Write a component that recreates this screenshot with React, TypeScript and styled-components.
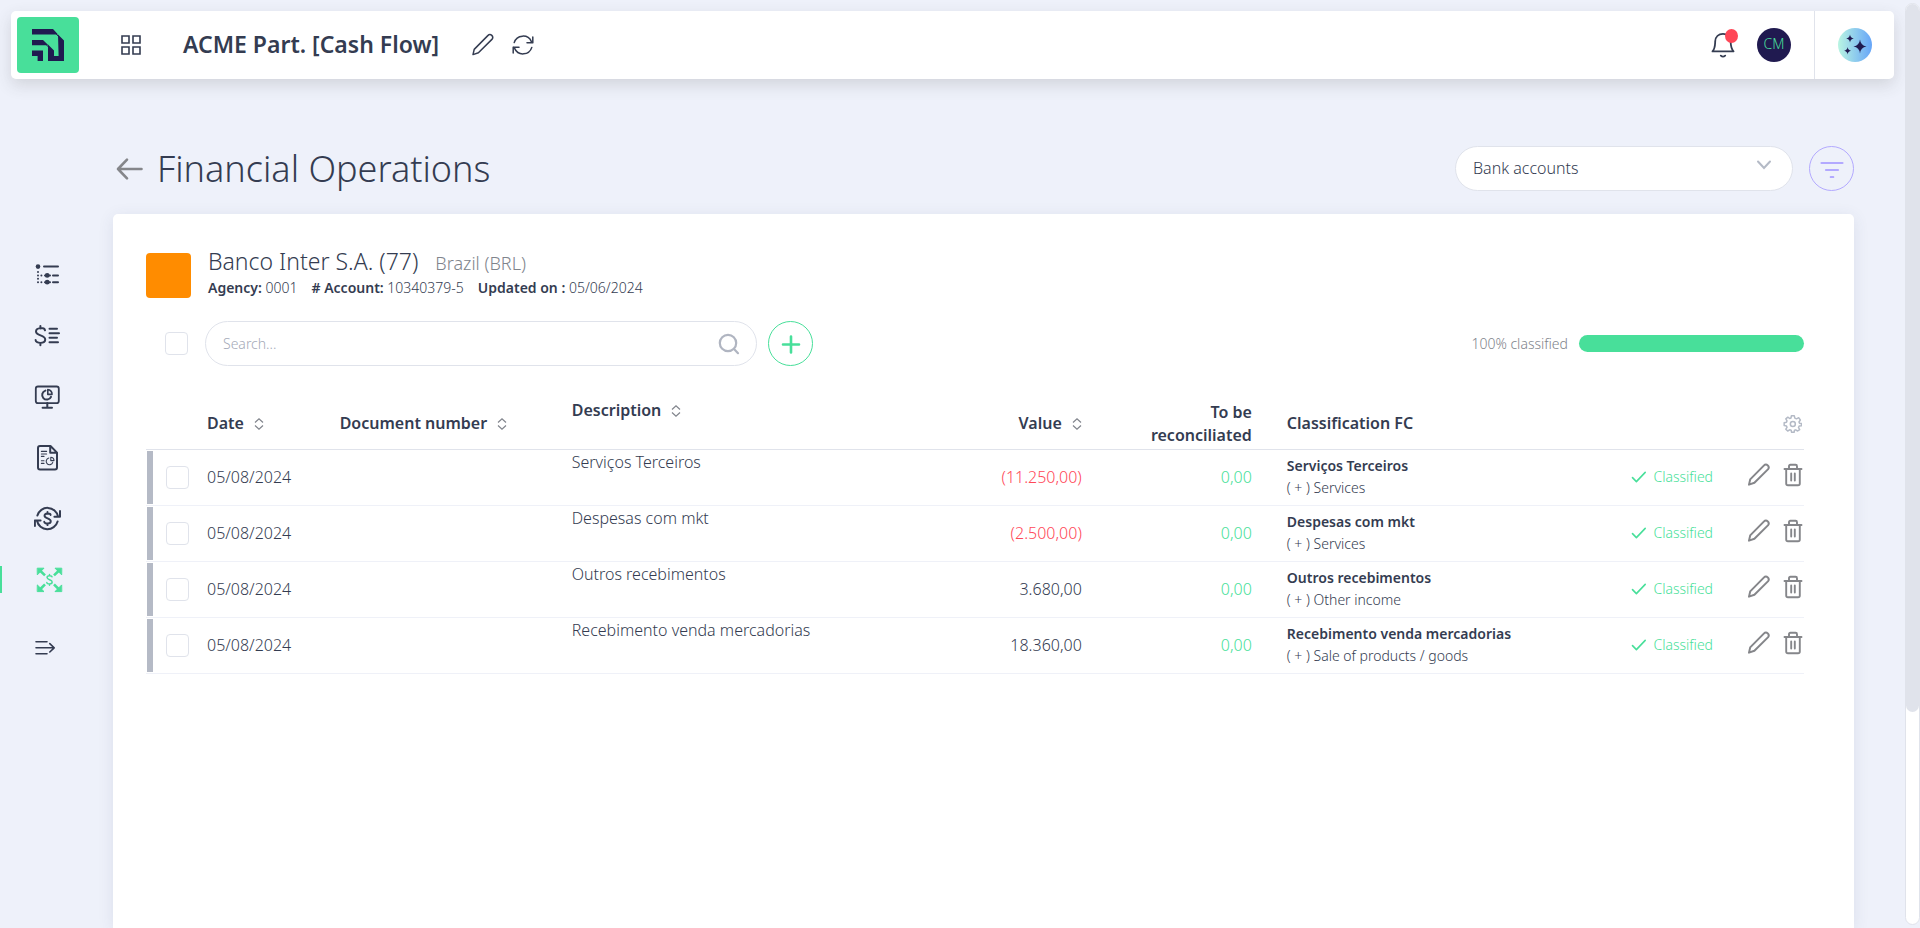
import React from "react";
import styled, { createGlobalStyle, css } from "styled-components";

const INK = "#343c51";
const GREEN = "#48df9a";
const LINE = "#e0e3eb";
const GREY = "#80848c";
const LIGHT = 350;

const Global = createGlobalStyle`
  *, *::before, *::after { box-sizing: border-box; }
  html { height: 100%; }
  body {
    margin: 0;
    height: 100%;
    background: #eef1fa;
    color: ${INK};
    font-family: "Noto Sans", "Open Sans", sans-serif;
    font-size: 16px;
    font-weight: ${LIGHT};
    line-height: 24px;
  }
  #root { height: 100%; }
  button, input, select { font: inherit; color: inherit; }
  svg { display: block; flex: none; }
`;

const Viewport = styled.div`
  display: flex;
  height: 100vh;
  overflow: hidden;
`;

const Page = styled.div`
  flex: 1;
  min-width: 0;
  display: flex;
  flex-direction: column;
  padding: 11px 11px 0;
`;

const ScrollTrack = styled.div`
  width: 15px;
  margin: 3px 0;
  flex: none;
  background: #fff;
  border: 1px solid ${LINE};
  border-radius: 8px;
`;

const ScrollThumb = styled.div`
  height: 77%;
  background: #e0e3eb;
  border-radius: 8px;
`;

const TopBar = styled.header`
  display: flex;
  align-items: center;
  height: 68px;
  flex: none;
  padding: 0 22px 0 6px;
  background: #fff;
  border-radius: 5px;
  box-shadow: 0 6px 16px rgba(60, 60, 60, 0.16);
`;

const Logo = styled.a`
  display: flex;
  width: 62px;
  height: 56px;
  align-items: center;
  justify-content: center;
  border-radius: 4px;
  background: ${GREEN};
`;

const IconButton = styled.button<{ $tone?: string }>`
  position: relative;
  display: inline-flex;
  align-items: center;
  justify-content: center;
  vertical-align: middle;
  width: 24px;
  height: 24px;
  padding: 0;
  border: 0;
  background: none;
  color: ${(p) => p.$tone ?? INK};
  cursor: pointer;
`;

const AppsSlot = styled.div`
  display: flex;
  margin: 0 40px;
`;

const Company = styled.h2`
  margin: 0 32px 0 0;
  padding-bottom: 2px;
  font-size: 23px;
  line-height: 32px;
  font-weight: 600;
  white-space: nowrap;
`;

const TitleActions = styled.div`
  display: flex;
  gap: 16px;
`;

const TopRight = styled.div`
  display: flex;
  align-items: center;
  align-self: stretch;
  gap: 22px;
  margin-left: auto;
`;

const Badge = styled.span`
  position: absolute;
  top: -4px;
  right: -3px;
  width: 13px;
  height: 14px;
  border-radius: 50%;
  background: #ff4757;
`;

const Avatar = styled.button`
  width: 34px;
  height: 34px;
  padding: 0 0 2px;
  border: 0;
  border-radius: 50%;
  background: #201a50;
  color: ${GREEN};
  font-size: 14px;
`;

const AssistantSlot = styled.div`
  display: flex;
  align-items: center;
  align-self: stretch;
  margin-left: 1px;
  padding-left: 23px;
  border-left: 1px solid ${LINE};
`;

const Assistant = styled(Avatar)`
  display: flex;
  align-items: center;
  justify-content: center;
  padding: 0;
  background: linear-gradient(90deg, #b9f5e2, #66a5f8);
  color: #201a50;
`;

const Body = styled.div`
  display: flex;
  flex: 1;
  min-height: 0;
`;

const Sidebar = styled.nav`
  display: flex;
  flex-direction: column;
  gap: 34px;
  width: 102px;
  flex: none;
  padding-top: 182px;
  margin-left: -11px;
`;

const NavLink = styled.a<{ $active?: boolean }>`
  display: flex;
  align-items: center;
  height: 27px;
  padding-left: 32px;
  border-left: 2px solid ${(p) => (p.$active ? GREEN : "transparent")};
  color: ${(p) => (p.$active ? GREEN : INK)};
  &:last-child { margin-top: 6px; }
`;

const Main = styled.main`
  flex: 1;
  min-width: 0;
  display: flex;
  flex-direction: column;
  padding: 67px 40px 0 11px;
`;

const Heading = styled.div`
  display: flex;
  align-items: center;
  height: 45px;
  flex: none;
  margin-bottom: 23px;
`;

const Title = styled.h1`
  margin: 0 auto 0 13px;
  font-size: 36px;
  line-height: 44px;
  font-weight: ${LIGHT};
`;

const BackLink = styled.a`
  display: flex;
  margin-left: 3px;
  color: #85868a;
`;

const SelectWrap = styled.label`
  position: relative;
  width: 338px;
  height: 45px;
  margin-right: 16px;
`;

const Select = styled.select`
  appearance: none;
  width: 100%;
  height: 100%;
  padding: 0 48px 2px 17px;
  border: 1px solid ${LINE};
  border-radius: 23px;
  background: #fff;
`;

const SelectArrow = styled.span`
  position: absolute;
  right: 21px;
  top: 14px;
  color: #b4bac6;
  pointer-events: none;
`;

const RoundButton = styled.button<{ $tone: string }>`
  display: flex;
  align-items: center;
  justify-content: center;
  width: 45px;
  height: 45px;
  flex: none;
  padding: 0;
  border: 1px solid ${(p) => p.$tone};
  border-radius: 50%;
  background: transparent;
  color: ${(p) => p.$tone};
`;

const Card = styled.section`
  flex: 1;
  padding: 31px 50px 0 33px;
  background: #fff;
  border-radius: 5px 5px 0 0;
  box-shadow: 0 3px 16px rgba(60, 70, 110, 0.1);
`;

const Account = styled.div`
  display: flex;
  align-items: flex-end;
  gap: 17px;
`;

const BankLogo = styled.div`
  width: 45px;
  height: 45px;
  border-radius: 4px;
  background: #ff8c00;
`;

const AccountName = styled.h3`
  display: flex;
  align-items: baseline;
  gap: 17px;
  margin: 0;
  font-size: 23px;
  line-height: 32px;
  font-weight: ${LIGHT};
`;

const Country = styled.span`
  font-size: 18px;
  color: ${GREY};
`;

const Facts = styled.div`
  display: flex;
  gap: 14px;
  padding-bottom: 1px;
  font-size: 14px;
  line-height: 18px;
  b { font-weight: 600; }
`;

const Tools = styled.div`
  display: flex;
  align-items: center;
  margin: 23px 0 29px;
`;

const Check = styled.input`
  appearance: none;
  display: block;
  width: 23px;
  height: 23px;
  margin: 0;
  border: 1px solid ${LINE};
  border-radius: 4px;
  background: #fff;
`;

const ToolsCheck = styled.div`
  padding: 0 17px 0 19px;
`;

const SearchBox = styled.label`
  display: flex;
  align-items: center;
  width: 552px;
  height: 45px;
  margin-right: 11px;
  padding: 0 16px 0 17px;
  border: 1px solid ${LINE};
  border-radius: 23px;
  color: #b0b5c1;
`;

const SearchInput = styled.input`
  flex: 1;
  border: 0;
  outline: 0;
  padding: 0;
  font-size: 14px;
  background: transparent;
  &::placeholder { color: #a5aab8; opacity: 1; }
`;

const Progress = styled.div`
  display: flex;
  align-items: center;
  gap: 11px;
  margin-left: auto;
  font-size: 14px;
  color: ${GREY};
`;

const Meter = styled.div`
  width: 225px;
  height: 17px;
  border-radius: 9px;
  background: ${GREEN};
`;

const Table = styled.table`
  width: 100%;
  table-layout: fixed;
  border-collapse: collapse;
`;

type CellProps = { $right?: boolean; $top?: boolean; $tone?: string };

const cell = css<CellProps>`
  padding: 0;
  text-align: ${(p) => (p.$right ? "right" : "left")};
  vertical-align: ${(p) => (p.$top ? "top" : "middle")};
  color: ${(p) => p.$tone ?? INK};
`;

const Th = styled.th<CellProps>`
  ${cell}
  height: 54px;
  padding-top: 4px;
  line-height: 23px;
  font-weight: 600;
  border-bottom: 1px solid ${LINE};
`;

const Td = styled.td<CellProps>`
  ${cell}
  height: 56px;
  border-bottom: 1px solid #eff1f8;
`;

const Sort = styled.button`
  display: inline-flex;
  align-items: center;
  gap: 10px;
  padding: 0;
  border: 0;
  background: none;
  font-weight: 600;
  line-height: 23px;
`;

const Marker = styled.div`
  display: flex;
  align-items: center;
  height: 53px;
  margin-left: 1px;
  padding-left: 13px;
  border-left: 6px solid #b5bac6;
`;

const Category = styled.div`
  padding-left: 35px;
  font-size: 14px;
  line-height: 22px;
  b { display: block; font-weight: 600; }
`;

const HeadIndent = styled.div`
  padding-left: 35px;
`;

const Status = styled.span`
  display: inline-flex;
  align-items: center;
  gap: 6px;
  font-size: 14px;
`;

const RowActions = styled.div`
  display: flex;
  justify-content: flex-end;
  gap: 9px;
  padding-bottom: 5px;
`;

const Pencil = ({ w = 1.5 }: { w?: number }) => (
  <svg width="24" height="24" viewBox="0 0 24 24" fill="none" stroke="currentColor" strokeWidth={w} strokeLinejoin="round">
    <path d="M2 21.6 L3.2 16.4 L16.8 2.6 C18 1.4 19.7 1.4 20.8 2.4 C22 3.6 21.9 5.2 20.9 6.4 L7.4 19.8 Z" />
  </svg>
);

const Trash = () => (
  <svg width="24" height="24" viewBox="-1 0 24 24" fill="none" stroke="currentColor" strokeWidth="1.9" strokeLinecap="round" strokeLinejoin="round">
    <path d="M3.5 6 H20.5 M8 6 V3.2 Q8 1.8 9.4 1.8 H14.6 Q16 1.8 16 3.2 V6 M5.2 6 V20.4 Q5.2 22.2 7 22.2 H17 Q18.8 22.2 18.8 20.4 V6 M10.2 10.5 V17.5 M13.8 10.5 V17.5" />
  </svg>
);

const SortGlyph = () => (
  <svg width="10" height="12" viewBox="0 0 10 12" fill="none" stroke={GREY} strokeWidth="1.2">
    <path d="M1 4.5 L5 .9 L9 4.5 M1 7.5 L5 11.1 L9 7.5" />
  </svg>
);

const dollar = "M4.6 -5.2 C4.2 -8.2 -4.4 -8.4 -4.4 -4 C-4.4 .4 4.8 -.6 4.8 4 C4.8 8.6 -4.8 8.2 -4.8 4.6 M0 -9.6 V-7 M0 7.4 V9.8";

const navItems: { label: string; active?: boolean; art: React.ReactNode }[] = [
  {
    label: "Chart of accounts",
    art: (
      <>
        <path d="M10 5.6 H24" />
        <path d="M19 14.4 H24 M19 21.2 H24 M11 14.4 H16 M11 21.2 H16" />
        <g fill="currentColor" stroke="none">
          <circle cx="4" cy="5.6" r="2.3" /><circle cx="13.2" cy="14.4" r="2.4" /><circle cx="13.2" cy="21.2" r="2.4" />
          <circle cx="4" cy="11" r="1" /><circle cx="4" cy="14.4" r="1" /><circle cx="4" cy="17.8" r="1" /><circle cx="4" cy="21.2" r="1" />
          <circle cx="7.4" cy="14.4" r="1" /><circle cx="7.4" cy="21.2" r="1" />
        </g>
      </>
    ),
  },
  {
    label: "Budget",
    art: (
      <>
        <path d={dollar} transform="translate(6.4 13.5)" />
        <path d="M15.5 6.8 H23 M15.5 11.2 H25 M15.5 15.8 H23 M15.5 20.2 H24" />
      </>
    ),
  },
  {
    label: "Dashboard",
    art: (
      <>
        <rect x="1.8" y="3.5" width="23" height="16.6" rx="2.2" strokeWidth="1.8" />
        <path d="M13.3 20 V24.6 M8.6 24.8 H18" />
        <path d="M11.4 7.6 A4.6 4.6 0 1 0 17 13.8" />
        <path strokeWidth="1.6" d="M13.8 6.6 V11.4 H18 A4.4 4.4 0 0 0 13.8 6.6 Z" />
      </>
    ),
  },
  {
    label: "Reports",
    art: (
      <>
        <path d="M6 2 H16.5 L23 8.6 V23.4 Q23 25.4 21 25.4 H6 Q4 25.4 4 23.4 V4 Q4 2 6 2 Z M16.2 2.6 V8.8 H22.6" />
        <path strokeWidth="1.1" d="M7.4 7.4 H12.6 M7.4 10 H12.6 M7.4 12.4 H10 M7.4 16.8 H10 M7.4 19.4 H10 M14.8 14 A3.4 3.4 0 1 0 18.8 18.4 M16.8 13.2 V16.6 H20 A3.3 3.3 0 0 0 16.8 13.2 Z" />
      </>
    ),
  },
  {
    label: "Cash flow",
    art: (
      <>
        <path d={dollar} transform="translate(13.5 13.5) scale(.68)" strokeWidth="2.8" />
        <path d="M3.4 10.6 A10.6 10.6 0 0 1 24 11.4 M23.6 16.4 A10.6 10.6 0 0 1 3 15.8 M26 6 V11.8 H20.4 M.9 21 V15.4 H6.6" />
      </>
    ),
  },
  {
    label: "Financial operations",
    active: true,
    art: (
      <g transform="translate(2 0)">
        <path d={dollar} transform="translate(13.5 13.8) scale(.56)" strokeWidth="2.6" />
        <path strokeWidth="2.6" strokeLinecap="butt" d="M3.4 4 L9 9.4 M23.6 4 L18 9.4 M3.4 24 L9 18.4 M23.6 24 L18 18.4" />
        <path fill="currentColor" strokeWidth="1" d="M1.6 2.2 H8 L1.6 8.6 Z M25.4 2.2 H19 L25.4 8.6 Z M1.6 25.6 H8 L1.6 19.2 Z M25.4 25.6 H19 L25.4 19.2 Z" />
      </g>
    ),
  },
  {
    label: "Expand menu",
    art: <path strokeWidth="1.6" d="M2 14.8 H20 M2 8.8 H13 M2 20.8 H13 M15.8 10.6 L20.2 14.8 L15.8 19" />,
  },
];

const rows = [
  { text: "Serviços Terceiros", value: "(11.250,00)", negative: true, group: "( + ) Services" },
  { text: "Despesas com mkt", value: "(2.500,00)", negative: true, group: "( + ) Services" },
  { text: "Outros recebimentos", value: "3.680,00", negative: false, group: "( + ) Other income" },
  { text: "Recebimento venda mercadorias", value: "18.360,00", negative: false, group: "( + ) Sale of products / goods" },
];

export default function App() {
  return (
    <Viewport>
      <Global />
      <Page>
        <TopBar>
          <Logo href="#" aria-label="Home">
            <svg width="32" height="32" viewBox="0 0 32 32" fill="#201a50">
              <path d="M0 0 H21 L26 5.4 H0 Z M26 5.4 L32 11.4 V32 H16 V15.4 L22 21.6 V27 H26.6 Z M0 11 H11 L16.4 16.2 H0 Z M0 21.6 H11 V32 H5.6 V27 H0 Z" />
              <path d="M20.5 1 L27 8 M10 11.4 L21 22.6" stroke="#201a50" strokeWidth="1" />
            </svg>
          </Logo>
          <AppsSlot>
            <IconButton aria-label="Apps">
              <svg width="24" height="24" viewBox="0 0 24 24" fill="none" stroke="currentColor" strokeWidth="1.6">
                <path d="M3 3 H10 V10 H3 Z M14 3 H21 V10 H14 Z M3 14 H10 V21 H3 Z M14 14 H21 V21 H14 Z" />
              </svg>
            </IconButton>
          </AppsSlot>
          <Company>ACME Part. [Cash Flow]</Company>
          <TitleActions>
            <IconButton aria-label="Rename"><Pencil /></IconButton>
            <IconButton aria-label="Refresh">
              <svg width="24" height="24" viewBox="0 0 24 24" fill="none" stroke="currentColor" strokeWidth="1.5" strokeLinecap="round" strokeLinejoin="round">
                <path d="M3.2 9.6 A9.2 9.2 0 0 1 20.4 8.6 L21.8 9.8 M21.8 4 V9.8 H16 M20.8 14.4 A9.2 9.2 0 0 1 3.6 15.4 L2.2 14.2 M2.2 20 V14.2 H8" />
              </svg>
            </IconButton>
          </TitleActions>
          <TopRight>
            <IconButton aria-label="Notifications">
              <svg width="24" height="26" viewBox="0 0 24 26" fill="none" stroke="currentColor" strokeWidth="1.8" strokeLinecap="round" strokeLinejoin="round">
                <path d="M1.5 19.4 C4.2 16.4 4 13.6 4.2 9.4 C4.4 4.8 7.6 1.8 12 1.8 C16.4 1.8 19.4 4.8 19.6 9.4 C19.8 13.6 19.8 16.4 22.5 19.4 Z M9.8 23.6 Q12 25.6 14.2 23.6" />
              </svg>
              <Badge />
            </IconButton>
            <Avatar>CM</Avatar>
            <AssistantSlot>
              <Assistant aria-label="Assistant">
                <svg width="24" height="24" viewBox="0 0 24 24" fill="currentColor">
                  <path d="M17 6.5 Q17.6 12.4 23.5 13.5 Q17.6 14.4 17 20.5 Q16.4 14.4 10.5 13.5 Q16.4 12.4 17 6.5 Z M7 1.5 Q7.4 5 10.8 5.5 Q7.4 6 7 9.5 Q6.6 6 3.2 5.5 Q6.6 5 7 1.5 Z M4.6 14 Q5 17.2 8 17.7 Q5 18.2 4.6 21.4 Q4.2 18.2 1.2 17.7 Q4.2 17.2 4.6 14 Z" />
                </svg>
              </Assistant>
            </AssistantSlot>
          </TopRight>
        </TopBar>
        <Body>
          <Sidebar>
            {navItems.map((n) => (
              <NavLink key={n.label} href="#" aria-label={n.label} $active={n.active}>
                <svg width="29" height="27" viewBox="0 0 29 27" fill="none" stroke="currentColor" strokeWidth="2" strokeLinecap="round" strokeLinejoin="round">{n.art}</svg>
              </NavLink>
            ))}
          </Sidebar>
          <Main>
            <Heading>
              <BackLink href="#" aria-label="Back">
                <svg width="28" height="24" viewBox="0 0 28 24" fill="none" stroke="currentColor" strokeWidth="2.6" strokeLinecap="round" strokeLinejoin="round">
                  <path d="M25.5 12 H2 M11 2.6 L2 12 L11 21.4" />
                </svg>
              </BackLink>
              <Title>Financial Operations</Title>
              <SelectWrap>
                <Select aria-label="Bank accounts" defaultValue="all"><option value="all">Bank accounts</option></Select>
                <SelectArrow>
                  <svg width="16" height="10" viewBox="0 0 16 10" fill="none" stroke="currentColor" strokeWidth="2" strokeLinecap="round"><path d="M2 1.5 L8 8 L14 1.5" /></svg>
                </SelectArrow>
              </SelectWrap>
              <RoundButton $tone="#b3a9ff" aria-label="Filter">
                <svg width="24" height="18" viewBox="0 0 24 18" fill="none" stroke="currentColor" strokeWidth="2.2" strokeLinecap="round"><path d="M1.5 3 H22.5 M6 10 H18 M10.8 17 H13.2" /></svg>
              </RoundButton>
            </Heading>
            <Card>
              <Account>
                <BankLogo />
                <div>
                  <AccountName>Banco Inter S.A. (77)<Country>Brazil (BRL)</Country></AccountName>
                  <Facts>
                    <span><b>Agency:</b> 0001</span>
                    <span><b># Account:</b> 10340379-5</span>
                    <span><b>Updated on :</b> 05/06/2024</span>
                  </Facts>
                </div>
              </Account>
              <Tools>
                <ToolsCheck><Check type="checkbox" aria-label="Select all" /></ToolsCheck>
                <SearchBox>
                  <SearchInput type="text" placeholder="Search..." aria-label="Search" />
                  <svg width="22" height="22" viewBox="0 0 22 22" fill="none" stroke="currentColor" strokeWidth="2.2" strokeLinecap="round"><circle cx="10" cy="10" r="8.2" /><path d="M16 16 L20 20.2" /></svg>
                </SearchBox>
                <RoundButton $tone={GREEN} aria-label="Add operation">
                  <svg width="20" height="20" viewBox="0 0 20 20" stroke="currentColor" strokeWidth="2.6" strokeLinecap="round"><path d="M10 2.5 V18.5 M2 10.5 H18" /></svg>
                </RoundButton>
                <Progress>
                  <span>100% classified</span>
                  <Meter role="progressbar" aria-label="Classified" aria-valuenow={100} />
                </Progress>
              </Tools>
              <Table>
                <colgroup>
                  <col style={{ width: 61 }} />
                  <col style={{ width: "8%" }} />
                  <col style={{ width: "14%" }} />
                  <col />
                  <col style={{ width: "12%" }} />
                  <col style={{ width: 170 }} />
                  <col style={{ width: "21%" }} />
                  <col style={{ width: 113 }} />
                  <col style={{ width: 91 }} />
                </colgroup>
                <thead>
                  <tr>
                    <Th aria-label="Selection" />
                    <Th><Sort>Date <SortGlyph /></Sort></Th>
                    <Th><Sort>Document number <SortGlyph /></Sort></Th>
                    <Th $top><Sort>Description <SortGlyph /></Sort></Th>
                    <Th $right><Sort>Value <SortGlyph /></Sort></Th>
                    <Th $right>To be<br />reconciliated</Th>
                    <Th><HeadIndent>Classification FC</HeadIndent></Th>
                    <Th aria-label="Status" />
                    <Th $right>
                      <IconButton $tone="#b4bac6" aria-label="Table settings">
                        <svg width="20" height="20" viewBox="-1 0 24 24" fill="none" stroke="currentColor" strokeWidth="1.8" strokeLinejoin="round">
                          <circle cx="12" cy="12" r="3" />
                          <path d="M10.3 2 H13.7 L14.4 4.9 L16.4 5.8 L19 4.4 L21 7.2 L19.4 9.6 L20 11 L22.4 11.4 V14 L19.6 14.4 L18.8 16.2 L20.2 18.8 L17.8 20.4 L15.4 19 L14 19.5 L13.5 22 H10.5 L10 19.5 L8.2 19 L5.8 20.4 L3.6 18.2 L5 16 L4.4 14.4 L1.6 13.8 V10.6 L4.4 9.8 L5 8.2 L3.6 5.8 L6 3.8 L8.2 5.4 L9.8 4.8 Z" />
                        </svg>
                      </IconButton>
                    </Th>
                  </tr>
                </thead>
                <tbody>
                  {rows.map((r) => (
                    <tr key={r.text}>
                      <Td><Marker><Check type="checkbox" aria-label={`Select ${r.text}`} /></Marker></Td>
                      <Td>05/08/2024</Td>
                      <Td />
                      <Td $top>{r.text}</Td>
                      <Td $right $tone={r.negative ? "#ff4757" : undefined}>{r.value}</Td>
                      <Td $right $tone={GREEN}>0,00</Td>
                      <Td><Category><b>{r.text}</b>{r.group}</Category></Td>
                      <Td $right $tone={GREEN}>
                        <Status>
                          <svg width="16" height="12" viewBox="0 0 16 12" fill="none" stroke="currentColor" strokeWidth="1.6" strokeLinecap="round" strokeLinejoin="round"><path d="M1.5 6.6 L5.4 10.6 L14.2 1.4" /></svg>
                          Classified
                        </Status>
                      </Td>
                      <Td>
                        <RowActions>
                          <IconButton $tone="#85868a" aria-label="Edit"><Pencil w={2} /></IconButton>
                          <IconButton $tone="#85868a" aria-label="Delete"><Trash /></IconButton>
                        </RowActions>
                      </Td>
                    </tr>
                  ))}
                </tbody>
              </Table>
            </Card>
          </Main>
        </Body>
      </Page>
      <ScrollTrack><ScrollThumb /></ScrollTrack>
    </Viewport>
  );
}
